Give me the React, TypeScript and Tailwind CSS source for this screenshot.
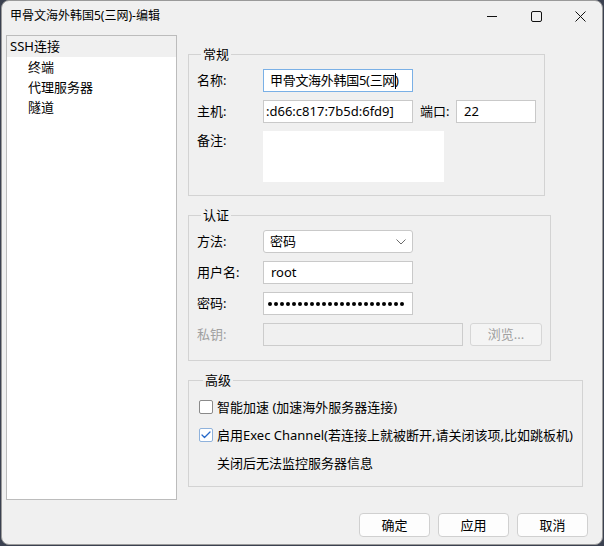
import { Check } from 'lucide-react';

const font = "font-['Noto_Sans','Noto_Sans_CJK_SC',sans-serif]";

function Label({ text, muted }: { text: string; muted?: boolean }) {
  return (
    <div className={`w-[66px] shrink-0 text-[13px] leading-[23px] ${muted ? 'text-[#a0a0a0]' : 'text-black'}`}>
      {text}
    </div>
  );
}

function TextBox({ children, width, focused }: { children?: React.ReactNode; width: string; focused?: boolean }) {
  return (
    <div
      className={`${width} h-[23px] bg-white border ${focused ? 'border-[#7ab0e6]' : 'border-[#c9c9c9]'} flex items-center overflow-hidden whitespace-nowrap text-[13px] leading-[21px]`}
    >
      {children}
    </div>
  );
}

function CheckRow({ checked, text }: { checked?: boolean; text: string }) {
  return (
    <div className="flex items-center h-[20px]">
      <div
        className={`w-[14px] h-[14px] rounded-[2px] bg-white border flex items-center justify-center ${
          checked ? 'border-[#8fb2dc]' : 'border-[#8a8a8a]'
        }`}
      >
        {checked && <Check className="w-[12px] h-[12px] text-[#2567c8]" strokeWidth={2.5} />}
      </div>
      <span className="ml-[4px] text-[13px] leading-[20px]">{text}</span>
    </div>
  );
}

function DialogButton({ text }: { text: string }) {
  return (
    <button className="w-[71px] h-[24px] rounded-[4px] border border-[#d0d0d0] bg-[#fdfdfd] text-[13px] leading-[22px] text-black">
      {text}
    </button>
  );
}

export default function App() {
  return (
    <div className={`w-[604px] h-[546px] bg-[#3b4150] ${font}`}>
      <div className="ml-px w-[602px] h-[545px] bg-[#f0f0f0] rounded-[8px] border border-[#9a9a9a] flex flex-col overflow-hidden">
        {/* 标题栏 */}
        <div className="h-[30px] flex items-center shrink-0">
          <div className="pl-[8px] text-[12px] leading-[16px] text-black flex-1">甲骨文海外韩国5(三网)-编辑</div>
          <div className="flex h-full">
            <div className="w-[44px] flex items-center justify-center">
              <svg width="10" height="10" viewBox="0 0 10 10">
                <path d="M0 5.5h10" stroke="#111" strokeWidth="1" />
              </svg>
            </div>
            <div className="w-[44px] flex items-center justify-center">
              <svg width="11" height="11" viewBox="0 0 11 11">
                <rect x="0.5" y="0.5" width="10" height="10" rx="1.5" fill="none" stroke="#111" strokeWidth="1" />
              </svg>
            </div>
            <div className="w-[44px] flex items-center justify-center">
              <svg width="11" height="11" viewBox="0 0 11 11">
                <path d="M0.5 0.5l10 10M10.5 0.5l-10 10" stroke="#111" strokeWidth="1" />
              </svg>
            </div>
          </div>
        </div>

        {/* 主体 */}
        <div className="flex mt-[4px]">
          {/* 左侧树 */}
          <div className="ml-[4px] w-[171px] h-[465px] bg-white border border-[#bcbcbc] text-[13px] text-black">
            <div className="h-[21px] bg-[#f0f0f0] pl-[3px] leading-[21px]">SSH连接</div>
            <div className="h-[20px] pl-[21px] leading-[20px]">终端</div>
            <div className="h-[20px] pl-[21px] leading-[20px]">代理服务器</div>
            <div className="h-[20px] pl-[21px] leading-[20px]">隧道</div>
          </div>

          {/* 右侧 */}
          <div className="ml-[11px] flex flex-col">
            {/* 常规 */}
            <fieldset className="mt-[10px] w-[356px] border border-[#d3d3d3] px-[8px] pt-[6px] pb-[13px]">
              <legend className="ml-[4px] px-[2px] text-[13px] leading-[18px]">常规</legend>
              <div className="flex flex-col gap-[8px]">
                <div className="flex">
                  <Label text="名称:" />
                  <TextBox width="w-[150px]" focused>
                    <span className="pl-[6px] tracking-[-0.3px] shrink-0">甲骨文海外韩国5(三网</span>
                    <span className="w-px h-[16px] bg-black shrink-0" />
                    <span className="shrink-0 -ml-[1px]">)</span>
                  </TextBox>
                </div>
                <div className="flex items-center">
                  <Label text="主机:" />
                  <TextBox width="w-[150px]">
                    <span className="pl-[2px]">:d66:c817:7b5d:6fd9]</span>
                  </TextBox>
                  <span className="ml-[7px] w-[36px] text-[13px] leading-[23px]">端口:</span>
                  <TextBox width="w-[80px]">
                    <span className="pl-[7px]">22</span>
                  </TextBox>
                </div>
                <div className="flex">
                  <div className="w-[66px] shrink-0 text-[13px] leading-[18px]">备注:</div>
                  <div className="w-[181px] h-[51px] bg-white" />
                </div>
              </div>
            </fieldset>

            {/* 认证 */}
            <fieldset className="mt-[10px] w-[362px] border border-[#d3d3d3] px-[8px] pt-[6px] pb-[14px]">
              <legend className="ml-[4px] px-[2px] text-[13px] leading-[18px]">认证</legend>
              <div className="flex flex-col gap-[8px]">
                <div className="flex">
                  <Label text="方法:" />
                  <div className="w-[150px] h-[23px] bg-white border border-[#c9c9c9] rounded-[3px] flex items-center justify-between pl-[6px] pr-[6px] text-[13px]">
                    <span>密码</span>
                    <svg width="10" height="6" viewBox="0 0 10 6">
                      <path d="M0.5 0.5l4.5 4.5 4.5-4.5" fill="none" stroke="#6b6b6b" strokeWidth="1" />
                    </svg>
                  </div>
                </div>
                <div className="flex">
                  <Label text="用户名:" />
                  <TextBox width="w-[150px]">
                    <span className="pl-[7px]">root</span>
                  </TextBox>
                </div>
                <div className="flex">
                  <Label text="密码:" />
                  <TextBox width="w-[150px]">
                    <div className="flex items-center gap-[2px] ml-[4px]">
                      {Array.from({ length: 23 }).map((_, i) => (
                        <span key={i} className="w-[4px] h-[4px] rounded-full bg-black shrink-0" />
                      ))}
                    </div>
                  </TextBox>
                </div>
                <div className="flex">
                  <Label text="私钥:" muted />
                  <div className="w-[200px] h-[23px] bg-[#f0f0f0] border border-[#cccccc]" />
                  <button className="ml-[7px] w-[72px] h-[23px] rounded-[3px] border border-[#d6d6d6] bg-[#f4f4f4] text-[13px] leading-[21px] text-[#a0a0a0]">
                    浏览...
                  </button>
                </div>
              </div>
            </fieldset>

            {/* 高级 */}
            <fieldset className="mt-[10px] w-[395px] border border-[#d3d3d3] pl-[10px] pr-[8px] pt-[8px] pb-[13px]">
              <legend className="ml-[4px] px-[2px] text-[13px] leading-[18px]">高级</legend>
              <div className="flex flex-col gap-[8px]">
                <CheckRow text="智能加速 (加速海外服务器连接)" />
                <CheckRow checked text="启用Exec Channel(若连接上就被断开,请关闭该项,比如跳板机)" />
                <div className="pl-[18px] text-[13px] leading-[20px]">关闭后无法监控服务器信息</div>
              </div>
            </fieldset>
          </div>
        </div>

        {/* 底部按钮 */}
        <div className="flex justify-end gap-[8px] pr-[14px] mt-[13px]">
          <DialogButton text="确定" />
          <DialogButton text="应用" />
          <DialogButton text="取消" />
        </div>
      </div>
    </div>
  );
}
